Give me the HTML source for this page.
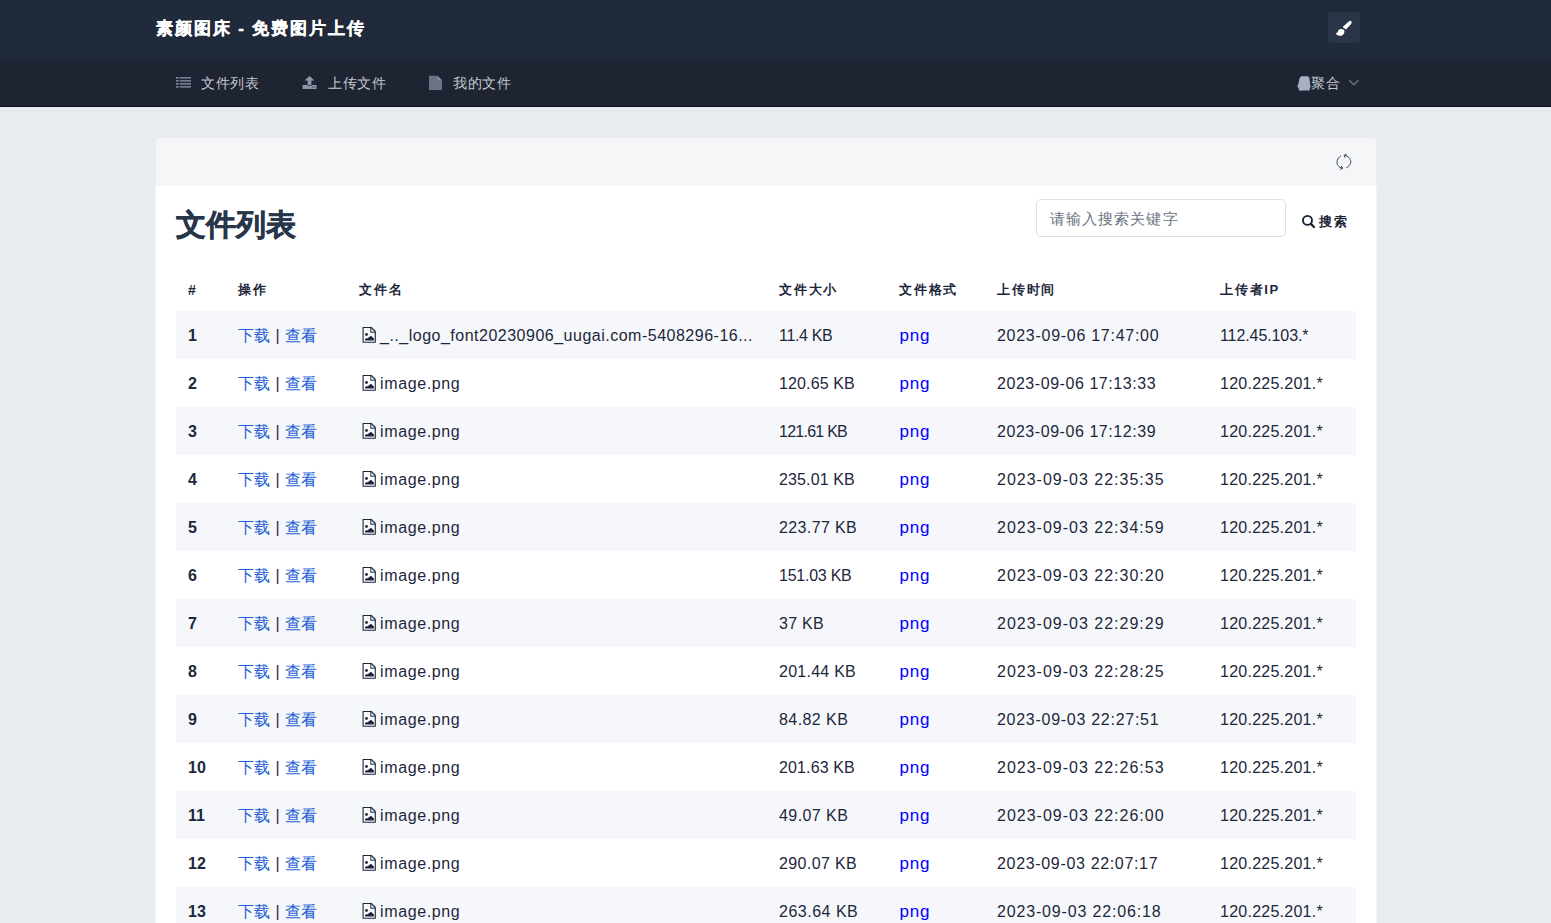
<!DOCTYPE html>
<html><head><meta charset="utf-8">
<style>
*{box-sizing:border-box;margin:0;padding:0}
html,body{width:1551px;height:923px;overflow:hidden}
body{font-family:"Liberation Sans",sans-serif;background:#e8ecf1;color:#1d273b;position:relative}
.abs{position:absolute}
.top{position:absolute;left:0;top:0;width:1551px;height:59px;background:#212a3a}
.brand{position:absolute;left:156px;top:17px;font-size:17px;line-height:24px;letter-spacing:1.9px;font-weight:bold;color:#fff;-webkit-text-stroke:0.3px #fff;white-space:nowrap}
.brush{position:absolute;left:1328px;top:12px;width:32px;height:31px;border-radius:4px;background:#293446}
.nav{position:absolute;left:0;top:59px;width:1551px;height:48px;background:#1e2431;border-bottom:1px solid #0f141c}
.ni{position:absolute;top:15.3px;font-size:14px;line-height:18px;letter-spacing:0.5px;color:#c3c8d0;white-space:nowrap}
.card{position:absolute;left:155px;top:137px;width:1222px;height:820px;border-radius:5px}
.cbody{position:absolute;left:0;top:49px;width:1222px;height:771px;background:#fff}
.cb{position:absolute;left:0;top:0;width:1222px;height:820px;border:1px solid rgba(98,105,118,.07);border-radius:5px}
.chead{position:absolute;left:0;top:0;width:1222px;height:49px;background:#f5f6f8;border-radius:5px 5px 0 0}
.title{position:absolute;left:176px;top:205px;font-size:30px;line-height:40px;font-weight:bold;color:#28364a;-webkit-text-stroke:0.5px #28364a;white-space:nowrap}
.search{position:absolute;left:1036px;top:199px;width:250px;height:38px;border:1px solid #dce0e6;border-radius:5px;background:#fff}
.ph{position:absolute;left:12.5px;top:8.5px;font-size:15px;line-height:20px;letter-spacing:1.15px;color:#6a7282;white-space:nowrap}
.sbtn{position:absolute;left:1318.5px;top:212.5px;font-size:13px;line-height:18px;letter-spacing:2px;font-weight:bold;white-space:nowrap;color:#1a2234}
.th{position:absolute;top:280.5px;font-size:13px;line-height:18px;letter-spacing:1.75px;font-weight:bold;color:#1d273b;white-space:nowrap}
.row{position:absolute;left:176px;width:1180px;height:48px}
.row.s{background:#f5f7fa}
.c{position:absolute;top:15px;font-size:16px;line-height:20px;white-space:nowrap;color:#1d273b}
.n{left:12px;font-weight:bold}
.op{left:62px;top:15px}
.op a{color:#1f5fd6;text-decoration:none}
.bar{margin:0 5.5px 0 5.5px;color:#3a1a3a}
.fn{left:204px;letter-spacing:0.55px}
.fn.lf{letter-spacing:0.47px}
.sz{left:603px}
.png{left:723.5px;top:15px;font-size:17px;color:#0000ff;letter-spacing:0.8px}
.dt{left:821px;letter-spacing:0.72px}
.ip{left:1044px;letter-spacing:0.2px}
.fi{position:absolute;left:186px;top:16px}
</style></head><body>
<svg width="0" height="0" style="position:absolute">
 <defs>
  <symbol id="fimg" viewBox="0 0 14 16">
   <path d="M1.1 0.5 H9.3 L13.3 4.5 V15.3 H1.1 Z" fill="none" stroke="#1d273b" stroke-width="1.1" stroke-linejoin="round"/>
   <path d="M8.8 0.6 V5.2 H13.2" fill="none" stroke="#1d273b" stroke-width="1"/>
   <circle cx="4.5" cy="7.5" r="1.4" fill="#1d273b"/>
   <path d="M3.1 13.5 V12.2 L4.3 11.1 L5.3 11.4 L8.9 8.8 L11.9 11.6 V13.5 Z" fill="#1d273b"/>
  </symbol>
 </defs>
</svg>
<div class="top">
  <div class="brand">素颜图床 - 免费图片上传</div>
  <div class="brush">
   <svg width="32" height="31" viewBox="0 0 32 31" style="position:absolute;left:0;top:0">
    <path d="M21.4 8.9 C22.4 8.4 24 9.3 23.7 10.7 C23.6 11.2 23.2 11.8 22.7 12.4 L18 17.6 L14.6 15 Z" fill="#fff"/>
    <path d="M16.4 19 C16.6 22 14.5 24 11.8 23.8 C9.8 23.7 8.2 22.6 7.8 21.2 C9 21.2 9.8 20.4 10 19.2 C10.3 17.6 11.8 16.8 13.3 16.9 C14.9 17 16.3 17.6 16.4 19 Z" fill="#fff"/>
   </svg>
  </div>
</div>
<div class="nav">
  <svg class="abs" style="left:176px;top:17px" width="16" height="12" viewBox="0 0 16 12">
    <rect x="0" y="1" width="2.6" height="1.7" fill="#7a8393"/><rect x="3.6" y="1" width="11.4" height="1.7" fill="#737c8c"/>
    <rect x="0" y="4" width="2.6" height="1.7" fill="#7a8393"/><rect x="3.6" y="4" width="11.4" height="1.7" fill="#737c8c"/>
    <rect x="0" y="7" width="2.6" height="1.7" fill="#7a8393"/><rect x="3.6" y="7" width="11.4" height="1.7" fill="#737c8c"/>
    <rect x="0" y="10" width="2.6" height="1.7" fill="#7a8393"/><rect x="3.6" y="10" width="11.4" height="1.7" fill="#737c8c"/>
  </svg>
  <div class="ni" style="left:201px">文件列表</div>
  <svg class="abs" style="left:302px;top:16px" width="16" height="14" viewBox="0 0 16 14">
    <path d="M7.5 1 L12.5 5.6 H9.4 V10 H5.6 V5.6 H2.5 Z" fill="#8f97a6"/>
    <path d="M0.6 10 H5.4 V10.8 H9.6 V10 H14.5 V14 H0.6 Z" fill="#8f97a6"/>
    <circle cx="10.6" cy="12" r="0.6" fill="#1e2431"/><circle cx="12.6" cy="12" r="0.6" fill="#1e2431"/>
  </svg>
  <div class="ni" style="left:328px">上传文件</div>
  <svg class="abs" style="left:429px;top:16px" width="14" height="15" viewBox="0 0 14 15">
    <path d="M0 0.7 H8.2 L13 5.5 V14.9 H0 Z" fill="#6b7385"/>
    <path d="M8.6 0.9 V5.1 H12.8 Z" fill="#8a92a2"/>
  </svg>
  <div class="ni" style="left:453px">我的文件</div>
  <svg class="abs" style="left:1297px;top:16.6px" width="14" height="15" viewBox="0 0 14 15">
    <path d="M4.5 0.3 H10.6 C12 0.6 12.5 2 12.6 3.4 C12.8 5.4 12.9 7 13.2 8.4 C13.5 9.4 13.7 10.2 13.6 11 C13.5 11.6 13 11.8 12.8 11.6 C12.9 12.8 12.9 13.8 12.5 14.4 H2.1 C1.7 13.8 1.7 12.8 1.8 11.6 C1.5 11.8 0.6 11.6 0.4 11 C0.3 10.2 0.6 9.4 1.1 8.4 C1.6 7 2.0 5.4 2.3 3.4 C2.6 2 3.2 0.6 4.5 0.3 Z" fill="#a6b0c0"/>
  </svg>
  <div class="ni" style="left:1311px">聚合</div>
  <svg class="abs" style="left:1348px;top:20px" width="12" height="8" viewBox="0 0 12 8">
    <path d="M1.2 1.2 L5.8 5.8 L10.4 1.2" fill="none" stroke="#6b7385" stroke-width="1.5"/>
  </svg>
</div>
<div class="card">
  <div class="chead"></div><div class="cbody"></div><div class="cb"></div>
  <svg class="abs" style="left:1180px;top:16px" width="18" height="18" viewBox="0 0 18 18">
    <g fill="none" stroke="#3d4452" stroke-width="1">
    <path d="M5.9 3.0 C2.5 4.6 0.6 9.6 3.2 12.8 C4.2 14.1 5.6 14.8 7.6 15.2"/>
    <path d="M6.2 13.0 L7.8 15.2 L4.9 16.4"/>
    <path d="M9.6 2.4 C13 2.8 15.8 5.8 15.8 8.8 C15.8 11.4 13.6 13.9 11.3 14.8"/>
    <path d="M11.7 1.2 L9.1 2.3 L10.1 4.8"/>
    </g>
  </svg>
</div>
<div class="title">文件列表</div>
<div class="search"><div class="ph">请输入搜索关键字</div></div>
<svg class="abs" style="left:1300px;top:213px" width="17" height="17" viewBox="0 0 17 17">
  <circle cx="7.5" cy="7.4" r="4.5" fill="none" stroke="#1a2234" stroke-width="1.9"/>
  <path d="M10.8 10.8 L14 14" stroke="#1a2234" stroke-width="2.3" stroke-linecap="round"/>
</svg>
<div class="sbtn">搜索</div>
<div class="th" style="left:188px;font-size:14px;top:281px">#</div>
<div class="th" style="left:238px">操作</div>
<div class="th" style="left:359px">文件名</div>
<div class="th" style="left:779px">文件大小</div>
<div class="th" style="left:899px">文件格式</div>
<div class="th" style="left:997px">上传时间</div>
<div class="th" style="left:1220px">上传者IP</div>
<div class="row s" style="top:311px"><span class="c n">1</span><span class="c op"><a>下载</a><span class="bar">|</span><a>查看</a></span><svg class="fi" width="14" height="16" viewBox="0 0 14 16"><use href="#fimg"/></svg><span class="c fn" style="letter-spacing:0.5px">_.._logo_font20230906_uugai.com-5408296-16...</span><span class="c sz" style="letter-spacing:-0.333px">11.4 KB</span><span class="c png">png</span><span class="c dt" style="letter-spacing:0.722px">2023-09-06 17:47:00</span><span class="c ip" style="letter-spacing:-0.091px">112.45.103.*</span></div>
<div class="row" style="top:359px"><span class="c n">2</span><span class="c op"><a>下载</a><span class="bar">|</span><a>查看</a></span><svg class="fi" width="14" height="16" viewBox="0 0 14 16"><use href="#fimg"/></svg><span class="c fn" style="letter-spacing:0.625px">image.png</span><span class="c sz" style="letter-spacing:0.125px">120.65 KB</span><span class="c png">png</span><span class="c dt" style="letter-spacing:0.556px">2023-09-06 17:13:33</span><span class="c ip" style="letter-spacing:0.25px">120.225.201.*</span></div>
<div class="row s" style="top:407px"><span class="c n">3</span><span class="c op"><a>下载</a><span class="bar">|</span><a>查看</a></span><svg class="fi" width="14" height="16" viewBox="0 0 14 16"><use href="#fimg"/></svg><span class="c fn" style="letter-spacing:0.625px">image.png</span><span class="c sz" style="letter-spacing:-0.75px">121.61 KB</span><span class="c png">png</span><span class="c dt" style="letter-spacing:0.556px">2023-09-06 17:12:39</span><span class="c ip" style="letter-spacing:0.25px">120.225.201.*</span></div>
<div class="row" style="top:455px"><span class="c n">4</span><span class="c op"><a>下载</a><span class="bar">|</span><a>查看</a></span><svg class="fi" width="14" height="16" viewBox="0 0 14 16"><use href="#fimg"/></svg><span class="c fn" style="letter-spacing:0.625px">image.png</span><span class="c sz" style="letter-spacing:0.125px">235.01 KB</span><span class="c png">png</span><span class="c dt" style="letter-spacing:1.0px">2023-09-03 22:35:35</span><span class="c ip" style="letter-spacing:0.25px">120.225.201.*</span></div>
<div class="row s" style="top:503px"><span class="c n">5</span><span class="c op"><a>下载</a><span class="bar">|</span><a>查看</a></span><svg class="fi" width="14" height="16" viewBox="0 0 14 16"><use href="#fimg"/></svg><span class="c fn" style="letter-spacing:0.625px">image.png</span><span class="c sz" style="letter-spacing:0.375px">223.77 KB</span><span class="c png">png</span><span class="c dt" style="letter-spacing:1.0px">2023-09-03 22:34:59</span><span class="c ip" style="letter-spacing:0.25px">120.225.201.*</span></div>
<div class="row" style="top:551px"><span class="c n">6</span><span class="c op"><a>下载</a><span class="bar">|</span><a>查看</a></span><svg class="fi" width="14" height="16" viewBox="0 0 14 16"><use href="#fimg"/></svg><span class="c fn" style="letter-spacing:0.625px">image.png</span><span class="c sz" style="letter-spacing:-0.25px">151.03 KB</span><span class="c png">png</span><span class="c dt" style="letter-spacing:1.0px">2023-09-03 22:30:20</span><span class="c ip" style="letter-spacing:0.25px">120.225.201.*</span></div>
<div class="row s" style="top:599px"><span class="c n">7</span><span class="c op"><a>下载</a><span class="bar">|</span><a>查看</a></span><svg class="fi" width="14" height="16" viewBox="0 0 14 16"><use href="#fimg"/></svg><span class="c fn" style="letter-spacing:0.625px">image.png</span><span class="c sz" style="letter-spacing:0.25px">37 KB</span><span class="c png">png</span><span class="c dt" style="letter-spacing:1.0px">2023-09-03 22:29:29</span><span class="c ip" style="letter-spacing:0.25px">120.225.201.*</span></div>
<div class="row" style="top:647px"><span class="c n">8</span><span class="c op"><a>下载</a><span class="bar">|</span><a>查看</a></span><svg class="fi" width="14" height="16" viewBox="0 0 14 16"><use href="#fimg"/></svg><span class="c fn" style="letter-spacing:0.625px">image.png</span><span class="c sz" style="letter-spacing:0.25px">201.44 KB</span><span class="c png">png</span><span class="c dt" style="letter-spacing:1.0px">2023-09-03 22:28:25</span><span class="c ip" style="letter-spacing:0.25px">120.225.201.*</span></div>
<div class="row s" style="top:695px"><span class="c n">9</span><span class="c op"><a>下载</a><span class="bar">|</span><a>查看</a></span><svg class="fi" width="14" height="16" viewBox="0 0 14 16"><use href="#fimg"/></svg><span class="c fn" style="letter-spacing:0.625px">image.png</span><span class="c sz" style="letter-spacing:0.429px">84.82 KB</span><span class="c png">png</span><span class="c dt" style="letter-spacing:0.722px">2023-09-03 22:27:51</span><span class="c ip" style="letter-spacing:0.25px">120.225.201.*</span></div>
<div class="row" style="top:743px"><span class="c n">10</span><span class="c op"><a>下载</a><span class="bar">|</span><a>查看</a></span><svg class="fi" width="14" height="16" viewBox="0 0 14 16"><use href="#fimg"/></svg><span class="c fn" style="letter-spacing:0.625px">image.png</span><span class="c sz" style="letter-spacing:0.125px">201.63 KB</span><span class="c png">png</span><span class="c dt" style="letter-spacing:1.0px">2023-09-03 22:26:53</span><span class="c ip" style="letter-spacing:0.25px">120.225.201.*</span></div>
<div class="row s" style="top:791px"><span class="c n">11</span><span class="c op"><a>下载</a><span class="bar">|</span><a>查看</a></span><svg class="fi" width="14" height="16" viewBox="0 0 14 16"><use href="#fimg"/></svg><span class="c fn" style="letter-spacing:0.625px">image.png</span><span class="c sz" style="letter-spacing:0.429px">49.07 KB</span><span class="c png">png</span><span class="c dt" style="letter-spacing:1.0px">2023-09-03 22:26:00</span><span class="c ip" style="letter-spacing:0.25px">120.225.201.*</span></div>
<div class="row" style="top:839px"><span class="c n">12</span><span class="c op"><a>下载</a><span class="bar">|</span><a>查看</a></span><svg class="fi" width="14" height="16" viewBox="0 0 14 16"><use href="#fimg"/></svg><span class="c fn" style="letter-spacing:0.625px">image.png</span><span class="c sz" style="letter-spacing:0.375px">290.07 KB</span><span class="c png">png</span><span class="c dt" style="letter-spacing:0.667px">2023-09-03 22:07:17</span><span class="c ip" style="letter-spacing:0.25px">120.225.201.*</span></div>
<div class="row s" style="top:887px"><span class="c n">13</span><span class="c op"><a>下载</a><span class="bar">|</span><a>查看</a></span><svg class="fi" width="14" height="16" viewBox="0 0 14 16"><use href="#fimg"/></svg><span class="c fn" style="letter-spacing:0.625px">image.png</span><span class="c sz" style="letter-spacing:0.5px">263.64 KB</span><span class="c png">png</span><span class="c dt" style="letter-spacing:0.833px">2023-09-03 22:06:18</span><span class="c ip" style="letter-spacing:0.25px">120.225.201.*</span></div></body></html>
